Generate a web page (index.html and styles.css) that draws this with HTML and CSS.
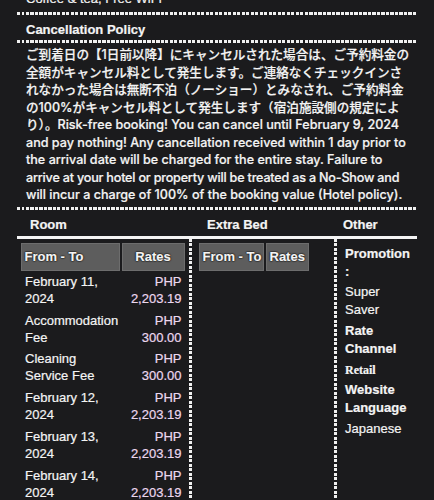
FILE: index.html
```html
<!DOCTYPE html>
<html lang="ja">
<head>
<meta charset="utf-8">
<title>Booking details</title>
<link rel="stylesheet" href="styles.css">
</head>
<body>
<div class="page">
  <div class="amen">Coffee &amp; tea, Free WiFi</div>
  <div class="dots"></div>
  <div class="sec-title">Cancellation Policy</div>
  <div class="dots"></div>
  <p class="policy">ご到着日の【1日前以降】にキャンセルされた場合は、ご予約料金の全額がキャンセル料として発生します。ご連絡なくチェックインされなかった場合は無断不泊（ノーショー）とみなされ、ご予約料金の100%がキャンセル料として発生します（宿泊施設側の規定により）。Risk-free booking! You can cancel until February 9, 2024 and pay nothing! Any cancellation received within 1 day prior to the arrival date will be charged for the entire stay. Failure to <span class="tight">arrive at your hotel or property will be treated as a No-Show and</span> will incur a charge of 100% of the booking value (Hotel policy).</p>
  <div class="dots"></div>

  <div class="rates">
    <div class="gh gh-room">Room</div>
    <div class="gh gh-bed">Extra Bed</div>
    <div class="gh gh-other">Other</div>
    <div class="rule"></div>

    <div class="col col-room">
      <div class="tbl tbl-room">
        <div class="th">From - To</div>
        <div class="th th-c">Rates</div>
        <div class="td">February 11, 2024</div>
        <div class="td td-r">PHP 2,203.19</div>
        <div class="td">Accommodation Fee</div>
        <div class="td td-r">PHP 300.00</div>
        <div class="td">Cleaning Service Fee</div>
        <div class="td td-r">PHP 300.00</div>
        <div class="td">February 12, 2024</div>
        <div class="td td-r">PHP 2,203.19</div>
        <div class="td">February 13, 2024</div>
        <div class="td td-r">PHP 2,203.19</div>
        <div class="td">February 14, 2024</div>
        <div class="td td-r">PHP 2,203.19</div>
      </div>
    </div>

    <div class="col col-bed dotted-left">
      <div class="tbl tbl-bed">
        <div class="th">From - To</div>
        <div class="th th-c">Rates</div>
      </div>
    </div>

    <div class="col col-other dotted-left">
      <div class="item"><div class="lbl">Promotion :</div></div>
      <div class="item"><div class="val">Super Saver</div></div>
      <div class="item"><div class="lbl">Rate Channel</div></div>
      <div class="item"><div class="val serif">Retail</div></div>
      <div class="item"><div class="lbl">Website Language</div></div>
      <div class="item"><div class="val">Japanese</div></div>
    </div>
  </div>
</div>
</body>
</html>
```

FILE: styles.css
```css
html, body {
  margin: 0;
  padding: 0;
  background: #1b1b1d;
}
body {
  width: 434px;
  height: 500px;
  overflow: hidden;
  color: #f4f4f4;
  font-family: "Liberation Sans", "Noto Sans CJK JP", sans-serif;
  font-size: 13px;
  -webkit-text-stroke: 0.2px currentColor;
}
.page {
  padding: 0 17px;
}
.amen {
  margin-top: -10px;
  padding: 0 9px 5px;
  line-height: 17px;
}
.dots {
  height: 3px;
  background: repeating-linear-gradient(90deg, #f0f0f0 0 3px, transparent 3px 4.5px);
}
.sec-title {
  font-weight: bold;
  padding: 6px 9px 2px;
  line-height: 17px;
}
.policy {
  margin: 0;
  padding: 3px 5px 3px 9px;
  font-family: "Inter", "Noto Sans CJK JP", sans-serif;
  font-weight: 500;
  font-size: 12.6px;
  line-height: 17.5px;
}
.tight {
  letter-spacing: -0.2px;
}
.rates {
  display: grid;
  grid-template-columns: 172px 145px 83px;
}
.gh {
  font-weight: bold;
  line-height: 17px;
  padding: 6px 0 3px;
}
.gh-room { padding-left: 13px; }
.gh-bed { padding-left: 18px; }
.gh-other { padding-left: 9px; }
.rule {
  grid-column: 1 / -1;
  height: 3px;
  background: #f4f4f4;
}
.col {
  min-height: 270px;
}
.dotted-left {
  background: repeating-linear-gradient(180deg, #f0f0f0 0 3px, transparent 3px 4.5px) left top / 3px 100% no-repeat;
  padding-left: 3px;
}
.tbl {
  display: grid;
  column-gap: 2px;
  margin-top: 4px;
}
.tbl-room {
  grid-template-columns: 99px 63px;
  margin-left: 3.5px;
}
.tbl-bed {
  grid-template-columns: 65px 43px;
  margin-left: 6.5px;
}
.th {
  height: 28px;
  box-sizing: border-box;
  background: #5d5d5d;
  border: 1px solid #6d6d6d;
  font-weight: bold;
  line-height: 26px;
  padding: 0 3px;
  text-shadow: 0 0 2px #000, 0 0 1px #000, 0 0 1px #000;
  white-space: nowrap;
}
.th-c { text-align: center; }
.td {
  line-height: 17px;
  padding: 2.4px 3px 2.4px 4.5px;
}
.td-r {
  text-align: right;
  color: #ecd8ef;
  padding-left: 0;
}
.col-other {
  padding-top: 6px;
  padding-left: 11px;
  padding-right: 4px;
}
.item {
  line-height: 18px;
  margin-bottom: 2.7px;
}
.lbl { font-weight: bold; }
.serif {
  font-family: "Liberation Serif", serif;
  font-weight: bold;
  font-size: 12px;
}
```
